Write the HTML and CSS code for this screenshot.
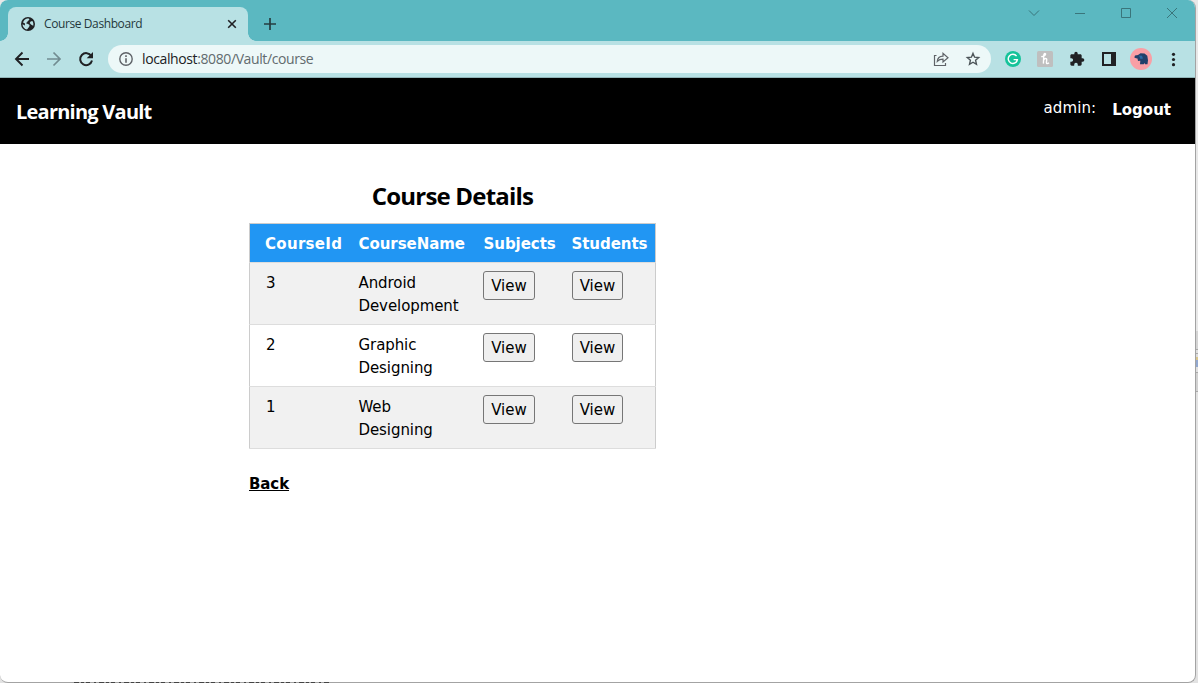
FILE: index.html
```html
<!DOCTYPE html>
<html lang="en">
<head>
<meta charset="utf-8">
<title>Course Dashboard</title>
<link rel="stylesheet" href="styles.css">
</head>
<body>
<div class="window">
  <div class="tabstrip">
    <div class="tab">
      <svg class="globe" width="14" height="14" viewBox="0 0 14 14"><circle cx="7" cy="7" r="7" fill="#202124"/><path d="M6.2 1.6C8 1.2 8.6 2 8.2 3L6.8 4 6 5.6 4.6 6 7 7l1.6 1-.4 1.8L6 12.6C3.6 12 1.6 10 1.5 7.2L4 8.4 3.8 6.3 2 5.6C2.8 3.4 4.3 2 6.2 1.6zM9.6 4.4l1.8-.3c1 1.5 1.2 3.2.8 4.6L10 7.6 8.7 6z" fill="#b8e1e4"/></svg>
      <span class="tab-title">Course Dashboard</span>
      <svg class="tab-close" width="10" height="10" viewBox="0 0 10 10"><path d="M1.2 1.2l7.6 7.6M8.8 1.2L1.2 8.8" stroke="#202124" stroke-width="1.6"/></svg>
    </div>
    <svg class="plus" width="14" height="14" viewBox="0 0 14 14"><path d="M7 1v12M1 7h12" stroke="#263c40" stroke-width="1.7"/></svg>
    <div class="controls">
      <svg width="12" height="12" viewBox="0 0 12 12"><path d="M1 3.5l5 5 5-5"/></svg>
      <svg width="12" height="12" viewBox="0 0 12 12"><path d="M1 6.5h10"/></svg>
      <svg width="12" height="12" viewBox="0 0 12 12"><path d="M1.5 1.5h9v9h-9z"/></svg>
      <svg width="12" height="12" viewBox="0 0 12 12"><path d="M1 1l10 10M11 1L1 11"/></svg>
    </div>
  </div>
  <div class="toolbar">
    <svg class="nav" width="16" height="16" viewBox="0 0 16 16"><path d="M15 8H2M8.5 1.5L2 8l6.5 6.5" fill="none" stroke="#202124" stroke-width="1.9"/></svg>
    <svg class="nav" width="16" height="16" viewBox="0 0 16 16"><path d="M1 8h13M7.5 1.5L14 8l-6.5 6.5" fill="none" stroke="#718c91" stroke-width="1.7"/></svg>
    <svg class="nav" width="16" height="16" viewBox="0 0 16 16"><path d="M13.3 5A6 6 0 1 0 14 9.5" fill="none" stroke="#202124" stroke-width="2"/><path d="M15 1v6.3H8.7z" fill="#202124"/></svg>
    <div class="omnibox">
      <svg width="14" height="14" viewBox="0 0 14 14"><circle cx="7" cy="7" r="6.2" fill="none" stroke="#5f6368" stroke-width="1.4"/><path d="M6.2 3.3h1.6v1.6H6.2zM6.2 6.2h1.6v4.6H6.2z" fill="#5f6368"/></svg>
      <span class="url"><span class="host">localhost</span>:8080/Vault/course</span>
      <svg class="share" width="16" height="16" viewBox="0 0 16 16"><path d="M3.5 4.5H1.5v10h11V12M4.3 10.4C4.6 6.8 6.8 5.3 10 5.2V2.3l5 4.4-5 4.3V8.2C7.2 8.2 5.7 8.9 4.3 10.4z" fill="none" stroke="#5f6368" stroke-width="1.2"/></svg>
      <svg class="star" width="16" height="16" viewBox="0 0 16 16"><path d="M8 2.4l1.6 3.8 4.1.4-3.1 2.7.9 4-3.5-2.1-3.5 2.1.9-4-3.1-2.7 4.1-.4z" fill="none" stroke="#4d5559" stroke-width="1.4"/></svg>
    </div>
    <div class="extensions">
      <svg width="16" height="16" viewBox="0 0 16 16"><circle cx="8" cy="8" r="8" fill="#15c39a"/><path d="M11.6 5.2A4.6 4.6 0 1 0 12.4 8.6H8.6M12.3 8.4L11.2 11.6" fill="none" stroke="#fff" stroke-width="1.4"/></svg>
      <svg width="16" height="16" viewBox="0 0 16 16"><rect width="16" height="16" rx="1.5" fill="#bfbfbf"/><path d="M4.2 5.6C6 5.6 8.8 4.4 8.6 3 8.2 2 6.9 2.6 6.8 4L6.4 12.6M6.6 9.2c1-2 3.3-2.4 3.1-.2l-.3 2.4c-.1 1.5 1.4 1.4 2.6.3" fill="none" stroke="#fff" stroke-width="1.4"/></svg>
      <svg width="16" height="16" viewBox="0 0 24 24"><path d="M20.5 11H19V7c0-1.1-.9-2-2-2h-4V3.500a2.500 2.500 0 0 0-5 0V5H4c-1.100 0-2 .9-2 2v3.800h1.500a2.700 2.700 0 0 1 0 5.400H2V20c0 1.100.9 2 2 2h3.800v-1.500a2.700 2.700 0 0 1 5.400 0V22H17c1.100 0 2-.9 2-2v-4h1.500a2.500 2.500 0 0 0 0-5z" fill="#202124"/></svg>
      <svg width="16" height="16" viewBox="0 0 16 16"><path d="M1 1h14v14H1zM3 3v10h7V3z" fill="#202124" fill-rule="evenodd"/></svg>
      <svg class="avatar" width="22" height="22" viewBox="0 0 22 22"><circle cx="11" cy="11" r="11" fill="#f99fa5"/><path d="M4.300 9.500L5 7.500 8 7l2.500-1.700 4 .3 2.800 2.200.7 4.500-.5 4h-2.400l-.5-1.300-.8 1.300H10l.3-3.500-2.300.1L7.500 10.500 6 10.300z" fill="#21406a"/><path d="M9 7.500l3 .3 1 2.700-2.500.4z" fill="#2968a4"/></svg>
      <svg width="16" height="16" viewBox="0 0 16 16"><g fill="#202124"><circle cx="8.500" cy="3.300" r="1.600"/><circle cx="8.500" cy="8.500" r="1.600"/><circle cx="8.500" cy="13.700" r="1.600"/></g></svg>
    </div>
  </div>
  <header class="site-header">
    <div class="brand">Learning Vault</div>
    <span class="user">admin:</span>
    <a class="logout">Logout</a>
  </header>
  <main class="content">
    <h2 class="title">Course Details</h2>
    <table class="courses">
      <thead><tr><th class="c-id">CourseId</th><th class="c-name">CourseName</th><th class="c-sub">Subjects</th><th class="c-stu">Students</th></tr></thead>
      <tbody>
        <tr><td>3</td><td>Android<br>Development</td><td class="action"><button class="view">View</button></td><td class="action"><button class="view narrow">View</button></td></tr>
        <tr><td>2</td><td>Graphic<br>Designing</td><td class="action"><button class="view">View</button></td><td class="action"><button class="view narrow">View</button></td></tr>
        <tr><td>1</td><td>Web<br>Designing</td><td class="action"><button class="view">View</button></td><td class="action"><button class="view narrow">View</button></td></tr>
      </tbody>
    </table>
    <a class="back">Back</a>
  </main>
</div>
<svg class="backdrop-edge" width="256" height="1" viewBox="0 0 256 1"><path d="M0 .5h256" stroke="#444" stroke-dasharray="5 2 3 2 4 4 2 3"/></svg>
</body>
</html>
```
FILE: styles.css
```css
* { box-sizing: border-box; }
body { margin: 0; width: 1198px; height: 683px; overflow: hidden; background: linear-gradient(#e8e8e8 331px, #d4d4d4 331px 349px, #a8a8a8 349px 350px, #e0e0e0 350px 353px, #aaa 353px 354px, #ddd 354px 357px, #d9c58c 357px 360px, #92a8cf 360px 367px, #e0e0e0 367px 372px, #aaa 372px 373px, #d2d2d2 373px 391px, #aaa 391px 392px, #e2e2e2 392px); font: 15px/23px Verdana, "DejaVu Sans", sans-serif; color: #000; }
.window { width: 1196px; height: 683px; border-right: 1px solid #a3a3a3; border-bottom: 1px solid #a3a3a3; border-radius: 8px; overflow: hidden; background: #fff; display: flex; flex-direction: column; }
/* Sliver of the window behind, showing under the bottom edge */
.backdrop-edge { position: absolute; left: 74px; top: 682px; }
.tabstrip { height: 41px; flex: none; background: #5bb8c1; display: flex; align-items: flex-start; padding: 7px 0 0 8px; }
.tab { position: relative; width: 240px; height: 34px; border-radius: 8px 8px 0 0; background: #b8e1e4; display: flex; align-items: center; padding: 0 11px 0 13px; }
.tab::before, .tab::after { content: ""; position: absolute; bottom: 0; width: 8px; height: 8px; }
.tab::before { left: -8px; background: radial-gradient(circle at 0 0, transparent 7.5px, #b8e1e4 8px); }
.tab::after { right: -8px; background: radial-gradient(circle at 100% 0, transparent 7.5px, #b8e1e4 8px); }
.tab-title { font: 12px/16px "Open Sans", sans-serif; letter-spacing: -0.4px; color: #24383c; margin-left: 9px; flex: 1; white-space: nowrap; }
.plus { margin: 10px 0 0 15px; }
.controls { margin-left: auto; display: flex; gap: 34px; padding-right: 17px; }
.controls svg { fill: none; stroke: #3a757b; stroke-width: 1; }
.toolbar { height: 37px; flex: none; background: #b8e1e4; border-bottom: 1px solid #91b4b7; display: flex; align-items: center; padding-left: 14px; }
.nav { margin-right: 16px; flex: none; }
.omnibox { width: 883px; height: 28px; margin-left: -2px; border-radius: 14px; background: #edf8f8; display: flex; align-items: center; padding: 0 10px 0 11px; }
.url { font: 14px/20px "Open Sans", sans-serif; letter-spacing: -0.39px; color: #626b6e; margin-left: 9px; flex: 1; }
.host { color: #202124; }
.star { margin-left: 16px; }
.extensions { display: flex; align-items: center; gap: 16px; margin-left: 14px; }
.avatar { margin: 0 -3px; }
.site-header { height: 66px; flex: none; background: #000; color: #fff; display: flex; padding: 0 24px 0 16px; }
.brand { font: bold 20px/30px "Open Sans", sans-serif; letter-spacing: -0.76px; margin-top: 19px; margin-right: auto; }
.user { margin-top: 19px; margin-right: 16px; letter-spacing: 0.1px; }
.logout { margin-top: 21px; font-weight: bold; }
.content { padding: 34px 0 0 249px; width: 656px; }
.title { font: bold 24px/36px "Open Sans", sans-serif; letter-spacing: -0.8px; text-align: center; margin: 0 0 9px; }
.courses { width: 407px; table-layout: fixed; border-collapse: collapse; border: 1px solid #ccc; }
.courses tr { border-bottom: 1px solid #ddd; }
.courses th { background: #2196f3; color: #fff; text-align: left; height: 38px; line-height: 22px; padding: 9px 0 7px 8px; letter-spacing: -0.05px; }
.courses td { height: 62px; padding: 9px 0 6px 8px; vertical-align: top; white-space: nowrap; letter-spacing: -0.08px; }
.courses td.action { padding-top: 8px; }
.courses th:first-child, .courses td:first-child { padding-left: 16px; }
.courses th.c-id { letter-spacing: 0.3px; padding-left: 15px; }
.courses tbody tr:nth-child(odd) { background: #f1f1f1; }
.c-id { width: 101px; }
.c-name { width: 125px; }
.c-sub { width: 88px; }
.view { display: block; width: 52px; height: 29px; padding: 1px 0 0 1px; font: 15px/23px Verdana, "DejaVu Sans", sans-serif; color: #000; background: #efefef; border: 1px solid #767676; border-radius: 3px; }
.view:not(.narrow) { margin-left: -1px; }
.narrow { width: 51px; }
.back { display: inline-block; margin-top: 24px; font-weight: bold; letter-spacing: -0.1px; text-decoration: underline; }
```
